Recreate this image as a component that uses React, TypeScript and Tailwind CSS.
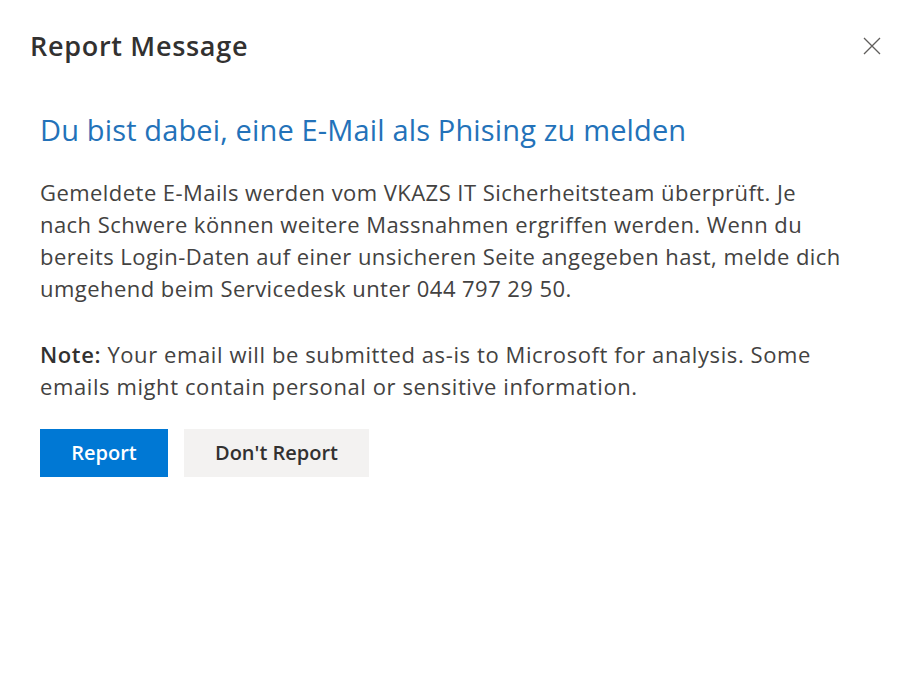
const App = () => {
  return (
    <div
      className="min-h-screen w-full bg-white text-[#323130]"
      style={{ fontFamily: '"Open Sans", "Noto Sans", sans-serif' }}
    >
      <div className="flex items-center justify-between pl-[30px] pr-[34px] pt-[27px]">
        <h1 className="text-[27px] font-semibold leading-[38px] tracking-[0.7px] text-[#323130]">Report Message</h1>
        <button className="flex h-[18px] w-[18px] items-center justify-center text-[#605e5c]">
          <svg width="18" height="18" viewBox="0 0 18 18" fill="none" stroke="currentColor" strokeWidth="1.3">
            <path d="M1 1L17 17M17 1L1 17" />
          </svg>
        </button>
      </div>

      <div className="pl-[40px] pr-[30px] pt-[45px]">
        <h2 className="text-[29px] font-normal leading-[40px] tracking-[0.15px] text-[#2372b9]">
          Du bist dabei, eine E-Mail als Phising zu melden
        </h2>

        <p className="mt-[26px] text-[22px] leading-[32px] tracking-[0.45px] text-[#434241]">
          Gemeldete E-Mails werden vom VKAZS IT Sicherheitsteam überprüft. Je
          <br />
          nach Schwere können weitere Massnahmen ergriffen werden. Wenn du
          <br />
          bereits Login-Daten auf einer unsicheren Seite angegeben hast, melde dich
          <br />
          umgehend beim Servicedesk unter 044 797 29 50.
        </p>

        <p className="mt-[34px] text-[22px] leading-[32px] tracking-[0.6px] text-[#434241]">
          <span className="font-semibold text-[#323130]">Note:</span> Your email will be submitted as-is to
          Microsoft for analysis. Some
          <br />
          emails might contain personal or sensitive information.
        </p>

        <div className="mt-[27px] flex gap-[16px]">
          <button className="h-[48px] w-[128px] bg-[#0078d4] text-[20px] font-semibold text-white">Report</button>
          <button className="h-[48px] w-[185px] bg-[#f3f2f1] text-[20px] font-semibold text-[#323130]">
            Don't Report
          </button>
        </div>
      </div>
    </div>
  );
};

export default App;
